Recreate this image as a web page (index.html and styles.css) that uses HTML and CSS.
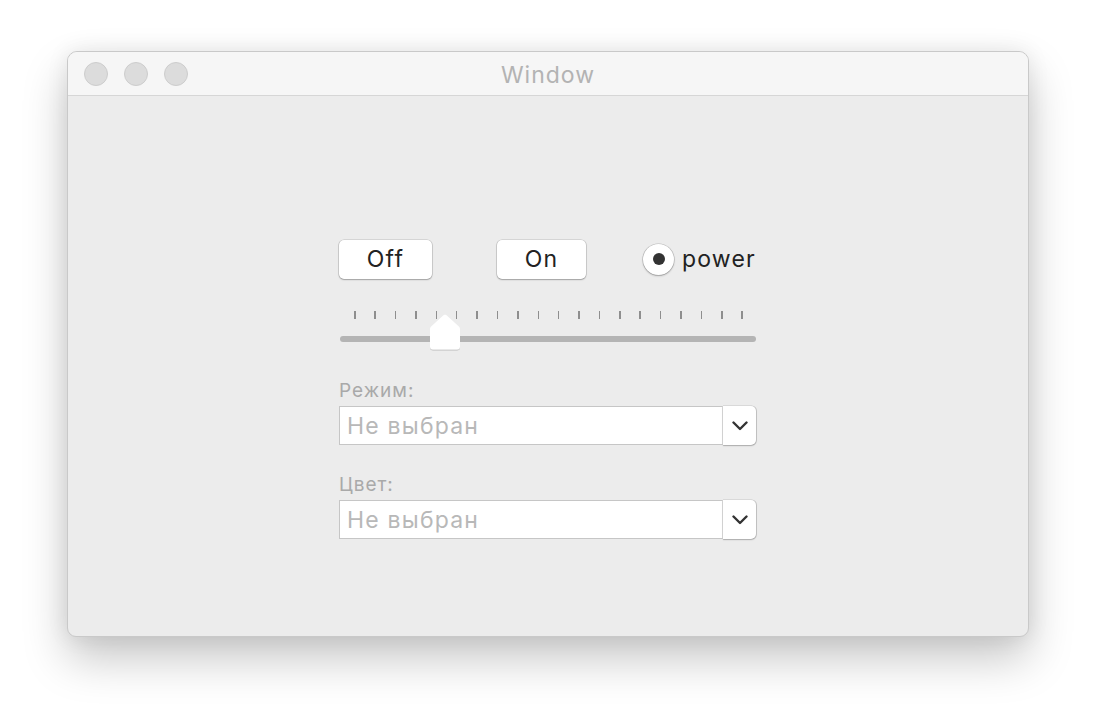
FILE: index.html
```html
<!DOCTYPE html>
<html lang="ru">
<head>
<meta charset="utf-8">
<title>Window</title>
<link rel="stylesheet" href="styles.css">
</head>
<body>
<div class="window">
  <div class="titlebar">
    <div class="lights">
      <span class="light"></span>
      <span class="light"></span>
      <span class="light"></span>
    </div>
    <div class="title">Window</div>
  </div>
  <div class="content">
    <div class="form">
      <div class="row">
        <button class="btn btn-off">Off</button>
        <button class="btn btn-on">On</button>
        <label class="radio"><span class="radio-circle"><span class="radio-dot"></span></span><span class="radio-label">power</span></label>
      </div>
      <div class="slider">
        <div class="ticks">
          <span></span><span></span><span></span><span></span><span></span>
          <span></span><span></span><span></span><span></span><span></span>
          <span></span><span></span><span></span><span></span><span></span>
          <span></span><span></span><span></span><span></span><span></span>
        </div>
        <div class="track"></div>
        <svg class="knob" width="36" height="40" viewBox="0 0 36 40">
          <defs>
            <filter id="ks" x="-30%" y="-30%" width="160%" height="160%">
              <feDropShadow dx="0" dy="0.6" stdDeviation="0.6" flood-color="#000" flood-opacity="0.35"/>
            </filter>
          </defs>
          <path d="M18 1.5 Q19 1.5 20 2.5 L32.3 13.8 Q33 14.5 33 15.8 L33 33.5 Q33 36.5 30 36.5 L6 36.5 Q3 36.5 3 33.5 L3 15.8 Q3 14.5 3.7 13.8 L16 2.5 Q17 1.5 18 1.5 Z" fill="#ffffff" filter="url(#ks)"/>
        </svg>
      </div>
      <div class="field">
        <div class="field-label">Режим:</div>
        <div class="select">
          <div class="select-value">Не выбран</div>
          <div class="select-btn">
            <svg width="16" height="10" viewBox="0 0 16 10"><path d="M1.5 1.5 L8 8 L14.5 1.5" fill="none" stroke="#333" stroke-width="2.4" stroke-linecap="round" stroke-linejoin="round"/></svg>
          </div>
        </div>
      </div>
      <div class="field">
        <div class="field-label">Цвет:</div>
        <div class="select">
          <div class="select-value">Не выбран</div>
          <div class="select-btn">
            <svg width="16" height="10" viewBox="0 0 16 10"><path d="M1.5 1.5 L8 8 L14.5 1.5" fill="none" stroke="#333" stroke-width="2.4" stroke-linecap="round" stroke-linejoin="round"/></svg>
          </div>
        </div>
      </div>
    </div>
  </div>
</div>
</body>
</html>
```
FILE: styles.css
```css
* { box-sizing: border-box; }
html, body { margin: 0; padding: 0; background: #ffffff; }
body {
  font-family: Inter, "Liberation Sans", Arial, sans-serif;
  width: 1096px;
  height: 720px;
  overflow: hidden;
  padding-top: 51px;
  padding-left: 67px;
}
.window {
  width: 962px;
  height: 586px;
  background: #ececec;
  border: 1px solid #c9c9c9;
  border-radius: 10px 10px 9px 9px;
  box-shadow: 0 22px 45px rgba(0,0,0,0.22), 0 0 22px rgba(0,0,0,0.08);
  overflow: hidden;
}
.titlebar {
  height: 44px;
  background: #f6f6f6;
  border-bottom: 1px solid #d6d6d6;
  display: flex;
  align-items: center;
  position: relative;
}
.lights {
  display: flex;
  gap: 16px;
  padding-left: 16px;
  padding-top: 1px;
}
.light {
  width: 24px;
  height: 24px;
  border-radius: 50%;
  background: #dcdcdc;
  border: 1px solid #cdcdcd;
}
.title {
  position: absolute;
  left: 0;
  right: 0;
  top: 0;
  bottom: 0;
  display: flex;
  align-items: center;
  justify-content: center;
  font-size: 23px;
  color: #b3b3b3;
  letter-spacing: 1px;
  padding-top: 2px;
}
.content {
  padding-top: 143px;
  padding-left: 271px;
}
.form {
  width: 418px;
}
.row {
  display: flex;
  align-items: center;
  height: 40px;
}
.btn {
  font-family: inherit;
  font-size: 23px;
  letter-spacing: 1.2px;
  color: #222;
  background: #ffffff;
  border: none;
  border-radius: 5px;
  height: 39px;
  padding: 0;
  box-shadow: 0 0 0 0.6px rgba(0,0,0,0.18), 0 1px 1.5px rgba(0,0,0,0.25);
}
.btn-off { width: 93px; }
.btn-on { width: 89px; margin-left: 65px; }
.radio {
  display: flex;
  align-items: center;
  margin-left: 57px;
}
.radio-circle {
  width: 31px;
  height: 31px;
  border-radius: 50%;
  background: #ffffff;
  box-shadow: 0 0 0 0.6px rgba(0,0,0,0.2), 0 1px 2px rgba(0,0,0,0.25);
  display: flex;
  align-items: center;
  justify-content: center;
}
.radio-dot {
  width: 12px;
  height: 12px;
  border-radius: 50%;
  background: #333;
}
.radio-label {
  font-size: 23px;
  letter-spacing: 1.2px;
  color: #222;
  margin-left: 8px;
}
.slider {
  position: relative;
  margin-top: 32px;
  height: 40px;
}
.ticks {
  display: flex;
  justify-content: space-between;
  padding: 0 14px 0 15px;
  height: 8px;
}
.ticks span {
  width: 1.5px;
  height: 8px;
  background: #8e8e8e;
}
.track {
  margin-top: 17px;
  margin-left: 1px;
  margin-right: 1px;
  height: 6px;
  border-radius: 3px;
  background: #b4b4b4;
}
.knob {
  position: absolute;
  left: 88px;
  top: 2px;
}
.field {
  margin-top: 29px;
}
.field-label {
  font-size: 19px;
  letter-spacing: 1px;
  line-height: 22px;
  color: #a9a9a9;
}
.select {
  margin-top: 4px;
  display: flex;
  height: 39px;
  width: 417px;
}
.select-value {
  flex: 1;
  background: #ffffff;
  border: 1px solid #c6c6c6;
  border-right: 1px solid #dadada;
  font-size: 23px;
  letter-spacing: 1.2px;
  color: #b8b8b8;
  padding-left: 7px;
  display: flex;
  align-items: center;
}
.select-btn {
  width: 33px;
  background: #ffffff;
  border-radius: 0 5px 5px 0;
  box-shadow: 0.5px 0 0 0.5px rgba(0,0,0,0.15), 0 1px 1.5px rgba(0,0,0,0.22);
  display: flex;
  align-items: center;
  justify-content: center;
}
```
